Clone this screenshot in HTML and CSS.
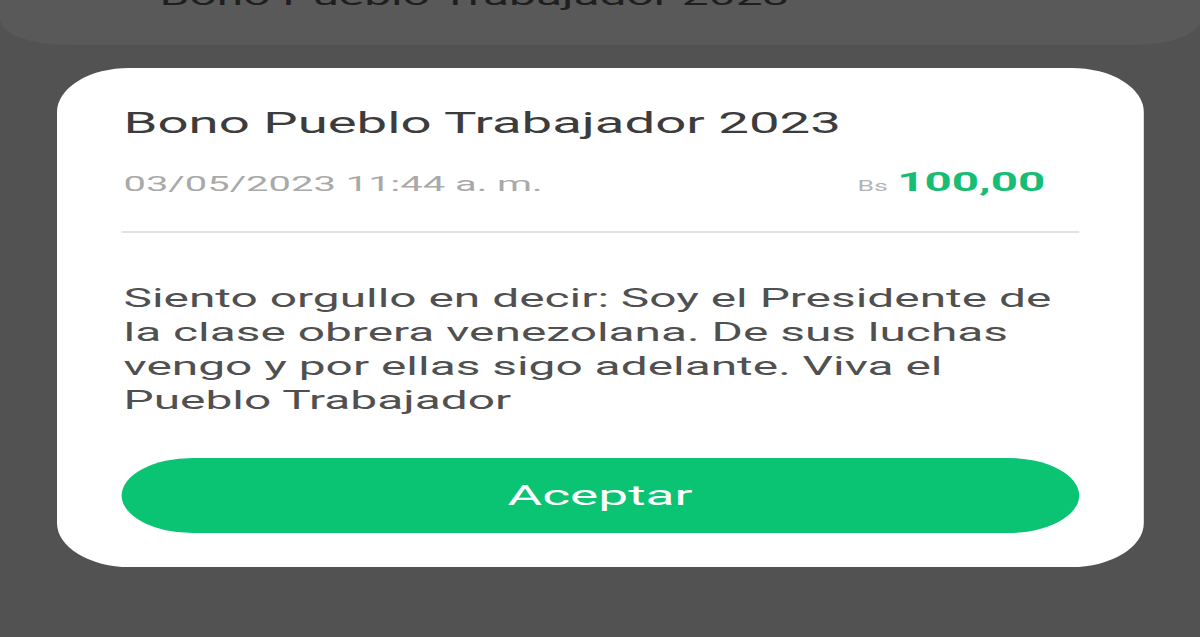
FILE: index.html
```html
<!DOCTYPE html>
<html lang="es">
<head>
    <meta charset="UTF-8">
    <meta name="viewport" content="width=device-width, initial-scale=1.0">
    <title>Bono Pueblo Trabajador 2023</title>
    <link rel="stylesheet" href="styles.css">
</head>
<body>

<div class="screen">
    <!-- tarjeta anterior, detrás del diálogo -->
    <div class="prev-card">
        <div class="prev-title">Bono Pueblo Trabajador 2023</div>
    </div>

    <div class="dialog">
        <h1 class="title">Bono Pueblo Trabajador 2023</h1>
        <div class="meta">
            <span class="date">03/05/2023 11:44 a. m.</span>
            <span class="amount"><span class="currency">Bs</span>100,00</span>
        </div>
        <hr class="divider">
        <p class="message">Siento orgullo en decir: Soy el Presidente de la clase obrera venezolana. De sus luchas vengo y por ellas sigo adelante. Viva el Pueblo Trabajador</p>
        <button class="accept-button" type="button">Aceptar</button>
    </div>
</div>

</body>
</html>
```

FILE: styles.css
```css
html, body {
    margin: 0;
    padding: 0;
    height: 100%;
    overflow: hidden;
}
body {
    background-color: #525252;
    font-family: Roboto, "Noto Sans", Arial, sans-serif;
}
/* la captura original está estirada en horizontal */
.screen {
    width: 631.6px;
    transform: scaleX(1.9);
    transform-origin: 0 0;
}
.prev-card {
    height: 45px;
    overflow: hidden;
    background-color: #595959;
    border-radius: 0 0 35px 35px / 0 0 26px 26px;
}
.prev-title {
    margin-top: -18px;
    padding-left: 84px;
    font-size: 25.2px;
    line-height: 30px;
    color: #1f1f1f;
}
.dialog {
    margin: 23px 30px 0;
    padding: 38px 34px 34px;
    background-color: white;
    border-radius: 38px / 44px;
}
.title {
    margin: 0;
    padding-left: 1px;
    font-size: 28.7px;
    font-weight: normal;
    line-height: 34px;
    color: #3c3c3c;
}
.meta {
    display: flex;
    justify-content: space-between;
    align-items: baseline;
    margin-top: 28px;
    padding-left: 1px;
    line-height: 30px;
}
.date {
    font-size: 21px;
    color: #a9a9a9;
}
.amount {
    font-size: 25px;
    font-weight: bold;
    color: #17bd74;
    padding-right: 17.5px;
}
.currency {
    font-size: 14px;
    font-weight: normal;
    color: #b3b3b3;
    margin-right: 5px;
}
.divider {
    margin: 30px 0 0;
    border: none;
    border-top: 2px solid #e2e2e2;
}
.message {
    margin: 49px 0 0;
    padding-left: 1px;
    font-size: 25.2px;
    line-height: 34px;
    color: #505050;
}
.accept-button {
    display: block;
    width: 100%;
    height: 75px;
    margin-top: 40px;
    background-color: #0bc473;
    color: white;
    font-family: Roboto, "Noto Sans", Arial, sans-serif;
    font-size: 28px;
    border: none;
    border-radius: 38px;
    cursor: pointer;
}
```
